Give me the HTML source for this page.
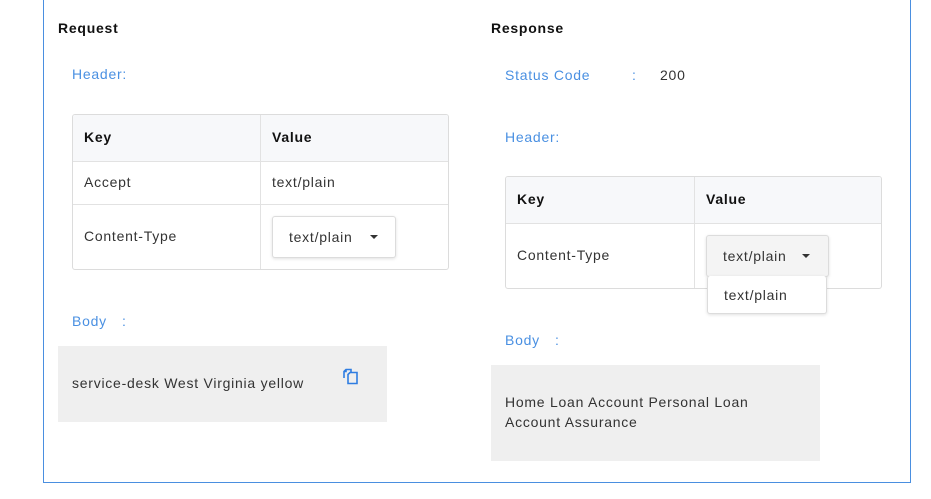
<!DOCTYPE html>
<html><head><style>
*{box-sizing:border-box;margin:0;padding:0}
body{width:931px;height:499px;background:#fff;font-family:"Liberation Sans",Arial,sans-serif;font-size:14px;color:#333;position:relative;overflow:hidden;letter-spacing:0.75px}
.a{position:absolute;white-space:nowrap}
.frame{position:absolute;left:43px;top:-2px;width:868px;height:485px;border:1px solid #4a8fe0;border-top:none}
.h{font-weight:bold;color:#111}
.blue{color:#4a90e2}
.tbl{position:absolute;border:1px solid #dcdcdc;border-radius:3px;overflow:hidden}
.row{position:absolute;left:0;right:0;border-bottom:1px solid #e2e2e2}
.hd{background:#f7f8fa}
.vl{position:absolute;top:0;bottom:0;width:1px;background:#e2e2e2}
.dd{position:absolute;border:1px solid #dcdcdc;border-radius:3px;box-shadow:0 1px 3px rgba(0,0,0,.12);background:#fff}
.car{position:absolute;width:0;height:0;border-left:4px solid transparent;border-right:4px solid transparent;border-top:4px solid #333}
.box{position:absolute;background:#efefef}
</style></head><body>
<div class="frame"></div>
<div class="a h" style="left:58px;top:20px">Request</div>
<div class="a h" style="left:491px;top:20px">Response</div>
<div class="a blue" style="left:72px;top:66px">Header:</div>

<div class="tbl" style="left:72px;top:114px;width:377px;height:156px">
 <div class="row hd" style="top:0;height:47px"></div>
 <div class="row" style="top:47px;height:43px"></div>
 <div class="vl" style="left:187px"></div>
</div>
<div class="a h" style="left:84px;top:129px">Key</div>
<div class="a h" style="left:272px;top:129px">Value</div>
<div class="a" style="left:84px;top:174px">Accept</div>
<div class="a" style="left:272px;top:174px">text/plain</div>
<div class="a" style="left:84px;top:228px">Content-Type</div>
<div class="dd" style="left:272px;top:216px;width:124px;height:42px"></div>
<div class="a" style="left:289px;top:229px">text/plain</div>
<div class="car" style="left:370px;top:235px"></div>

<div class="a blue" style="left:72px;top:313px">Body</div>
<div class="a blue" style="left:122px;top:313px">:</div>
<div class="box" style="left:58px;top:346px;width:329px;height:76px"></div>
<div class="a" style="left:72px;top:375px">service-desk West Virginia yellow</div>
<svg class="a" style="left:342px;top:368px" width="18" height="18" viewBox="0 0 18 18" fill="none" stroke="#2f7de1" stroke-width="1.6"><path d="M2 10V3.5L4 1.5H9V4"/><path d="M6 6.5L8 4.5H15V15.5H6Z"/><path d="M4 1.5V3.5H2"/></svg>

<div class="a blue" style="left:505px;top:67px">Status Code</div>
<div class="a blue" style="left:632px;top:67px">:</div>
<div class="a" style="left:660px;top:67px">200</div>
<div class="a blue" style="left:505px;top:129px">Header:</div>

<div class="tbl" style="left:505px;top:176px;width:377px;height:113px">
 <div class="row hd" style="top:0;height:47px"></div>
 <div class="vl" style="left:188px"></div>
</div>
<div class="a h" style="left:517px;top:191px">Key</div>
<div class="a h" style="left:706px;top:191px">Value</div>
<div class="a" style="left:517px;top:247px">Content-Type</div>
<div class="dd" style="left:706px;top:235px;width:123px;height:42px;background:#f4f4f4"></div>
<div class="a" style="left:723px;top:248px">text/plain</div>
<div class="car" style="left:802px;top:254px"></div>
<div class="dd" style="left:707px;top:276px;width:120px;height:38px;border-top:none"></div>
<div class="a" style="left:724px;top:287px">text/plain</div>

<div class="a blue" style="left:505px;top:332px">Body</div>
<div class="a blue" style="left:555px;top:332px">:</div>
<div class="box" style="left:491px;top:365px;width:329px;height:96px"></div>
<div class="a" style="left:505px;top:392px;line-height:20px">Home Loan Account Personal Loan<br>Account Assurance</div>
</body></html>
